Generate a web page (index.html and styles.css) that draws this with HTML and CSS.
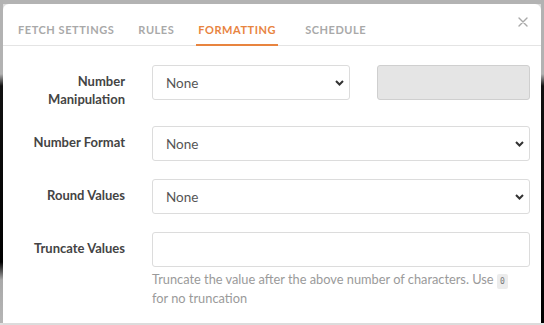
FILE: index.html
```html
<!DOCTYPE html>
<html>
<head>
<meta charset="utf-8">
<link rel="stylesheet" href="styles.css">
</head>
<body>
<div class="modal">
  <div class="tabs">
    <span class="tab">Fetch Settings</span>
    <span class="tab">Rules</span>
    <span class="tab active">Formatting</span>
    <span class="tab">Schedule</span>
  </div>
  <button class="close" aria-label="Close">
    <svg width="10" height="10" viewBox="0 0 10 10"><path d="M1 1L9 9M9 1L1 9" stroke="#a9a9a9" stroke-width="1.4" stroke-linecap="round"/></svg>
  </button>
  <div class="form">
    <div class="row">
      <label class="label">Number<br>Manipulation</label>
      <div class="field split">
        <div class="select-wrap">
          <select class="select"><option>None</option></select>
          <svg class="chev" width="9" height="6" viewBox="0 0 9 6"><path d="M1 1L4.5 4.5L8 1" fill="none" stroke="#333" stroke-width="2"/></svg>
        </div>
        <input class="input disabled" disabled>
      </div>
    </div>
    <div class="row">
      <label class="label">Number Format</label>
      <div class="field">
        <div class="select-wrap">
          <select class="select"><option>None</option></select>
          <svg class="chev" width="9" height="6" viewBox="0 0 9 6"><path d="M1 1L4.5 4.5L8 1" fill="none" stroke="#333" stroke-width="2"/></svg>
        </div>
      </div>
    </div>
    <div class="row">
      <label class="label">Round Values</label>
      <div class="field">
        <div class="select-wrap">
          <select class="select"><option>None</option></select>
          <svg class="chev" width="9" height="6" viewBox="0 0 9 6"><path d="M1 1L4.5 4.5L8 1" fill="none" stroke="#333" stroke-width="2"/></svg>
        </div>
      </div>
    </div>
    <div class="row">
      <label class="label">Truncate Values</label>
      <div class="field">
        <input class="input">
        <p class="help">Truncate the value after the above number of characters. Use <code>0</code> for no truncation</p>
      </div>
    </div>
  </div>
</div>
</body>
</html>
```

FILE: styles.css
```css
html, body {
  margin: 0;
  height: 100%;
}
body {
  background-color: #dcdcdc;
  background-image:
    linear-gradient(to bottom, #b2b2b2 0, #b2b2b2 74px, #111 86px, #000 262px, #a9a9a9 280px, #b5b5b5 323px, #e0e0e0 323px),
    linear-gradient(to bottom, #b2b2b2 0, #b2b2b2 74px, #111 86px, #000 323px, #e0e0e0 323px),
    linear-gradient(#b3b3b3, #b3b3b3);
  background-size: 3px 100%, 3px 100%, 100% 4px;
  background-position: left top, right top, left top;
  background-repeat: no-repeat;
  font-family: "Lato", "Noto Sans", sans-serif;
  overflow: hidden;
}
.modal {
  position: relative;
  margin: 4px 3px 0 3px;
  height: 319px;
  background: #fff;
  border-radius: 6px 6px 0 0;
}
.tabs {
  display: flex;
  gap: 20px;
  padding-left: 13px;
  height: 42px;
  border-bottom: 1px solid #e4e4e4;
  box-sizing: border-box;
}
.tab {
  display: flex;
  align-items: center;
  padding: 11px 2px 0;
  font-size: 11px;
  font-weight: 700;
  letter-spacing: 0.55px;
  text-transform: uppercase;
  color: #a9a9a9;
  border-bottom: 2px solid transparent;
  margin-bottom: -1px;
}
.tab.active {
  color: #e8843f;
  border-bottom-color: #e8843f;
}
.tab.active + .tab {
  margin-left: 5px;
}
.close {
  position: absolute;
  top: 12px;
  right: 12px;
  width: 12px;
  height: 12px;
  padding: 0;
  border: 0;
  background: none;
  display: flex;
  align-items: center;
  justify-content: center;
}
.form {
  padding: 19px 11px 0 15px;
}
.row {
  display: grid;
  grid-template-columns: 107px 1fr;
  column-gap: 27px;
  margin-bottom: 18px;
}
.label {
  text-align: right;
  font-size: 13px;
  font-weight: 700;
  line-height: 18px;
  color: #444;
  padding-top: 7px;
}
.field.split {
  display: grid;
  grid-template-columns: 198px 1fr;
  column-gap: 27px;
}
.select-wrap {
  position: relative;
}
.select {
  appearance: none;
  -webkit-appearance: none;
  width: 100%;
  height: 35px;
  box-sizing: border-box;
  border: 1px solid #dcdcdc;
  border-radius: 3px;
  background: #fff;
  padding: 0 28px 0 13px;
  font-family: inherit;
  font-size: 13.5px;
  color: #555;
  margin: 0;
}
.chev {
  position: absolute;
  right: 6px;
  top: 15px;
  pointer-events: none;
}
.input {
  display: block;
  width: 100%;
  height: 35px;
  box-sizing: border-box;
  border: 1px solid #dcdcdc;
  border-radius: 3px;
  background: #fff;
  margin: 0;
  font-family: inherit;
}
.input.disabled {
  background: #e5e5e5;
  border-color: #cfcfcf;
}
.help {
  margin: 4px 0 0;
  max-width: 362px;
  font-size: 12.8px;
  line-height: 16px;
  color: #9a9a9a;
}
code {
  font-family: "DejaVu Sans Mono", monospace;
  font-size: 8px;
  background: #ececec;
  color: #777;
  border-radius: 2px;
  padding: 3px 3px;
}
```
